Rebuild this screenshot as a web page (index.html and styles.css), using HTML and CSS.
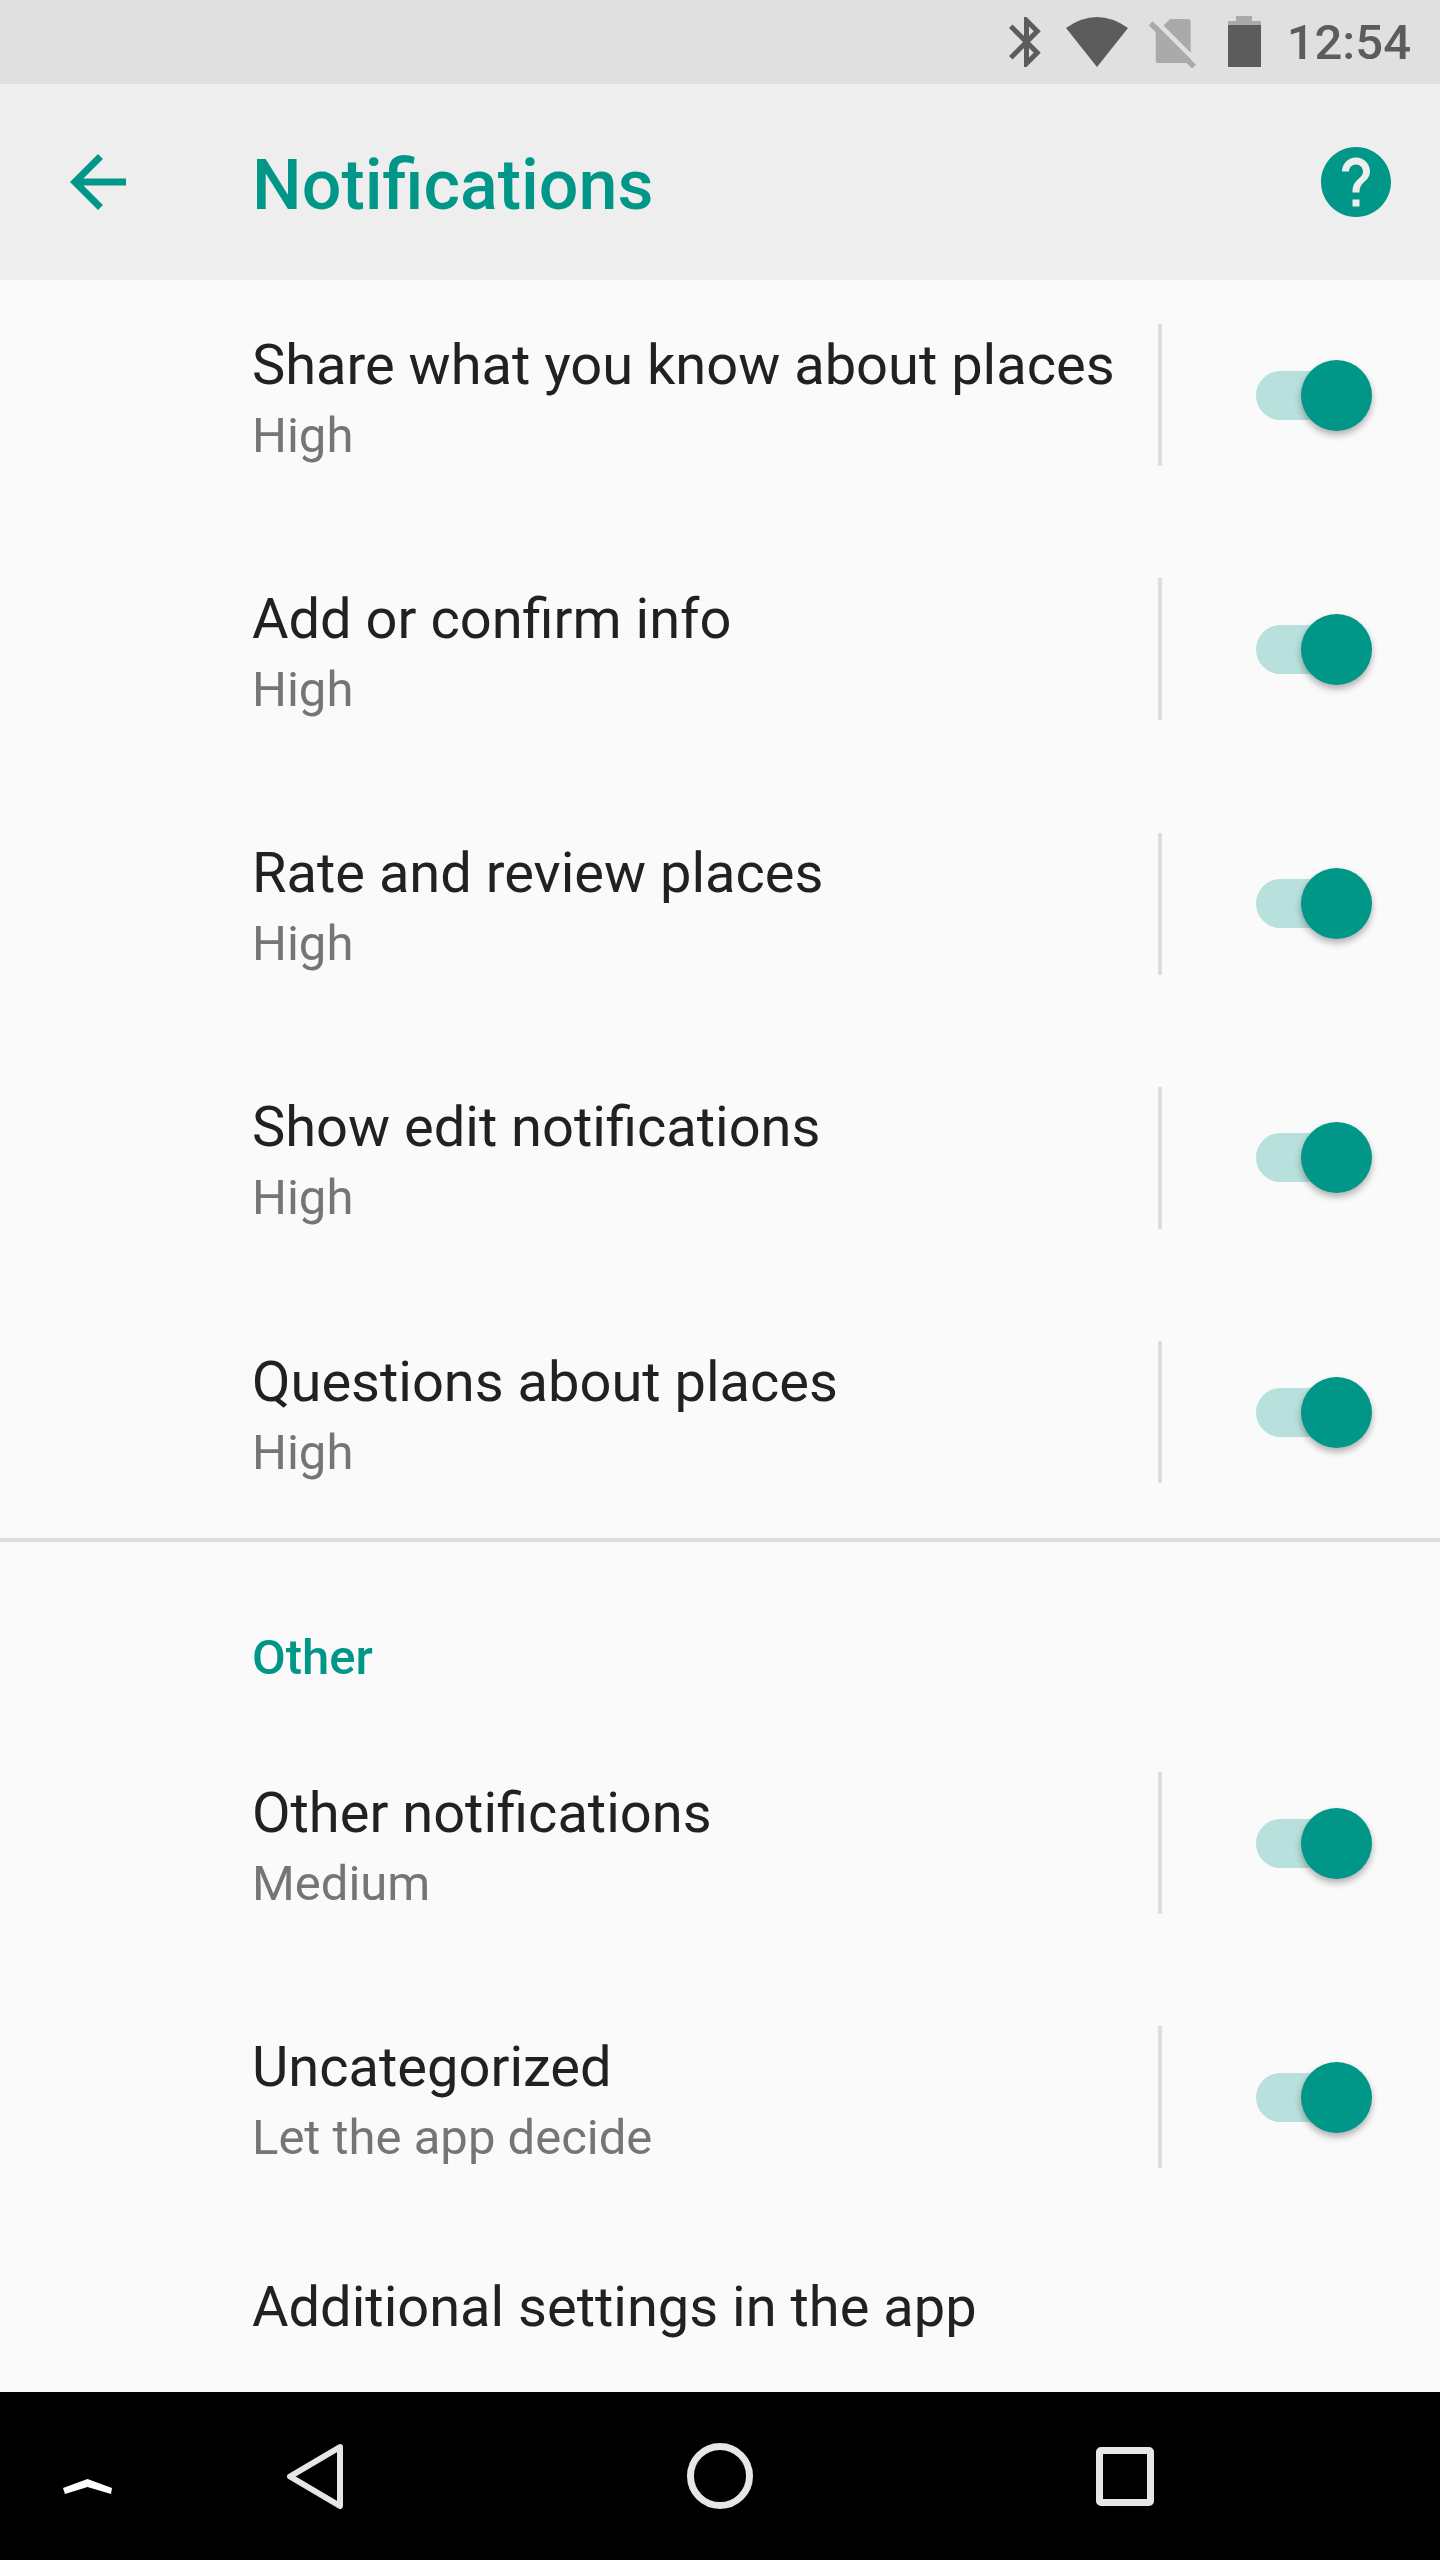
FILE: index.html
```html
<!DOCTYPE html>
<html lang="en">
<head>
    <meta charset="UTF-8">
    <meta name="viewport" content="width=device-width, initial-scale=1.0">
    <title>Notifications</title>
    <link rel="stylesheet" href="styles.css">
</head>
<body>
    <div class="screen">
        <!-- Status bar -->
        <div class="status-bar">
            <svg class="status-icon bluetooth" width="32" height="52" viewBox="5 1.6 12.8 20.8"><path d="M17.71 7.71L12 2h-1v7.59L6.41 5 5 6.41 10.59 12 5 17.59 6.41 19 11 14.41V22h1l5.71-5.71-4.3-4.29 4.3-4.29zM13 5.83l1.88 1.88L13 9.59V5.83zm1.88 10.46L13 18.17v-3.76l1.88 1.88z"/></svg>
            <svg class="status-icon wifi" width="62" height="52" viewBox="0 0 62 52"><path d="M0 12Q31 -10 62 12L31 51Z"/></svg>
            <svg class="status-icon sim" width="47" height="52" viewBox="0 0 47 52">
                <path class="dim" d="M6.7 8.3L41.7 43.3V45Q41.7 47 39 47H9Q6.7 47 6.7 45Z"/>
                <path class="dim" d="M14.5 9.5L21 3H39Q41.7 3 41.7 6V36.7Z"/>
                <path class="slash" d="M1.7 7.3L45 50.7"/>
            </svg>
            <svg class="status-icon battery" width="33" height="52" viewBox="0 0 33 52">
                <path class="dim" d="M8 0H24V5H33V9H0V5H8Z"/>
                <rect y="9" width="33" height="42"/>
            </svg>
            <span class="time">12:54</span>
        </div>

        <!-- App bar -->
        <header class="app-bar">
            <svg class="back" width="84" height="84" viewBox="0 0 24 24"><path d="M20 11H7.83l5.59-5.59L12 4l-8 8 8 8 1.41-1.41L7.83 13H20v-2z"/></svg>
            <h1>Notifications</h1>
            <svg class="help" width="84" height="84" viewBox="0 0 24 24"><path d="M12 2C6.48 2 2 6.48 2 12s4.48 10 10 10 10-4.48 10-10S17.52 2 12 2zm1 17h-2v-2h2v2zm2.07-7.75l-.9.92C13.45 12.9 13 13.5 13 15h-2v-.5c0-1.1.45-2.1 1.17-2.83l1.24-1.26c.37-.36.59-.86.59-1.41 0-1.1-.9-2-2-2s-2 .9-2 2H8c0-2.21 1.79-4 4-4s4 1.79 4 4c0 .88-.36 1.68-.93 2.25z"/></svg>
        </header>

        <main class="list">
            <div class="row">
                <div class="row-text"><div class="row-title">Share what you know about places</div><div class="row-summary">High</div></div>
                <div class="row-divider"></div>
                <div class="switch"><div class="knob"></div></div>
            </div>
            <div class="row">
                <div class="row-text"><div class="row-title">Add or confirm info</div><div class="row-summary">High</div></div>
                <div class="row-divider"></div>
                <div class="switch"><div class="knob"></div></div>
            </div>
            <div class="row">
                <div class="row-text"><div class="row-title">Rate and review places</div><div class="row-summary">High</div></div>
                <div class="row-divider"></div>
                <div class="switch"><div class="knob"></div></div>
            </div>
            <div class="row">
                <div class="row-text"><div class="row-title">Show edit notifications</div><div class="row-summary">High</div></div>
                <div class="row-divider"></div>
                <div class="switch"><div class="knob"></div></div>
            </div>
            <div class="row">
                <div class="row-text"><div class="row-title">Questions about places</div><div class="row-summary">High</div></div>
                <div class="row-divider"></div>
                <div class="switch"><div class="knob"></div></div>
            </div>

            <div class="category">Other</div>

            <div class="row">
                <div class="row-text"><div class="row-title">Other notifications</div><div class="row-summary">Medium</div></div>
                <div class="row-divider"></div>
                <div class="switch"><div class="knob"></div></div>
            </div>
            <div class="row">
                <div class="row-text"><div class="row-title">Uncategorized</div><div class="row-summary">Let the app decide</div></div>
                <div class="row-divider"></div>
                <div class="switch"><div class="knob"></div></div>
            </div>
            <div class="row">
                <div class="row-text row-text-single"><div class="row-title">Additional settings in the app</div></div>
            </div>
        </main>

        <!-- Navigation bar -->
        <nav class="nav-bar">
            <svg class="nav-menu" width="49" height="16" viewBox="0 0 49 16"><path d="M0 9L24.5 0L49 9L48 15L24.5 8L2 15Z"/></svg>
            <svg width="58" height="67" viewBox="0 0 58 67"><path class="nav-back" d="M54 4L4 33.5L54 63Z"/></svg>
            <div class="nav-home"></div>
            <div class="nav-recent"></div>
        </nav>
    </div>
</body>
</html>
```

FILE: styles.css
```css
body {
    font-family: Roboto, sans-serif;
    margin: 0;
    padding: 0;
    background-color: #fafafa;
}
.screen {
    width: 1440px;
    height: 2560px;
    display: flex;
    flex-direction: column;
    overflow: hidden;
}

/* Status bar */
.status-bar {
    height: 84px;
    flex: none;
    display: flex;
    align-items: center;
    justify-content: flex-end;
    padding-right: 29px;
    background-color: #e0e0e0;
    position: relative;
    z-index: 1;
}
.status-icon {
    fill: #5c5c5c;
}
.status-icon .dim {
    fill: #aaaaaa;
}
.status-icon .slash {
    fill: none;
    stroke: #aaaaaa;
    stroke-width: 5.5;
}
.wifi {
    margin-left: 25px;
}
.sim {
    margin-left: 21px;
}
.battery {
    margin-left: 32px;
}
.time {
    margin-left: 26px;
    font-size: 49px;
    font-weight: 500;
    color: #5c5c5c;
}

/* App bar */
.app-bar {
    height: 196px;
    flex: none;
    display: flex;
    align-items: center;
    padding: 0 42px 0 56px;
    background-color: #eeeeee;
    position: relative;
    z-index: 1;
}
.back, .help {
    fill: #009688;
}
.app-bar h1 {
    flex: 1;
    margin: 0 0 0 112px;
    padding-top: 6px;
    font-size: 70px;
    font-weight: 500;
    color: #009688;
}

/* List */
.list {
    flex: 1;
    min-height: 0;
    margin-top: -12px;
}
.row {
    height: 254.25px;
    display: flex;
    align-items: center;
}
.row-text {
    width: 1158px;
    align-self: flex-start;
    box-sizing: border-box;
    padding: 59.5px 0 0 252px;
}
.row-text-single {
    padding-top: 45px;
}
.row-title {
    font-size: 56px;
    line-height: 74px;
    color: #212121;
}
.row-summary {
    font-size: 49px;
    line-height: 68px;
    color: #757575;
}
.row-divider {
    width: 4px;
    height: 142px;
    background-color: #dddddd;
}
.switch {
    width: 112px;
    height: 49px;
    margin-left: 94px;
    border-radius: 25px;
    background-color: #b8e0dc;
    position: relative;
}
.knob {
    position: absolute;
    top: -11px;
    right: -4px;
    width: 71px;
    height: 71px;
    border-radius: 50%;
    background-color: #009688;
    box-shadow: 0 4px 7px rgba(0, 0, 0, 0.3);
}
.category {
    margin-top: -1.25px;
    height: 178px;
    box-sizing: border-box;
    border-top: 4px solid #dddddd;
    padding: 83px 0 0 252px;
    font-size: 49px;
    font-weight: 500;
    line-height: 66px;
    color: #009688;
}

/* Navigation bar */
.nav-bar {
    height: 168px;
    flex: none;
    display: grid;
    grid-template-columns: 175px 280px 530px 280px;
    align-items: center;
    justify-items: center;
    background-color: #000;
    position: relative;
    z-index: 1;
}
.nav-menu {
    fill: #fff;
    margin-top: 21px;
}
.nav-back {
    fill: none;
    stroke: #e6e6e6;
    stroke-width: 6;
    stroke-linejoin: round;
}
.nav-home {
    width: 66px;
    height: 66px;
    box-sizing: border-box;
    border: 7px solid #e6e6e6;
    border-radius: 50%;
}
.nav-recent {
    width: 58px;
    height: 59px;
    box-sizing: border-box;
    border: 7px solid #e6e6e6;
    border-radius: 5px;
}
```
